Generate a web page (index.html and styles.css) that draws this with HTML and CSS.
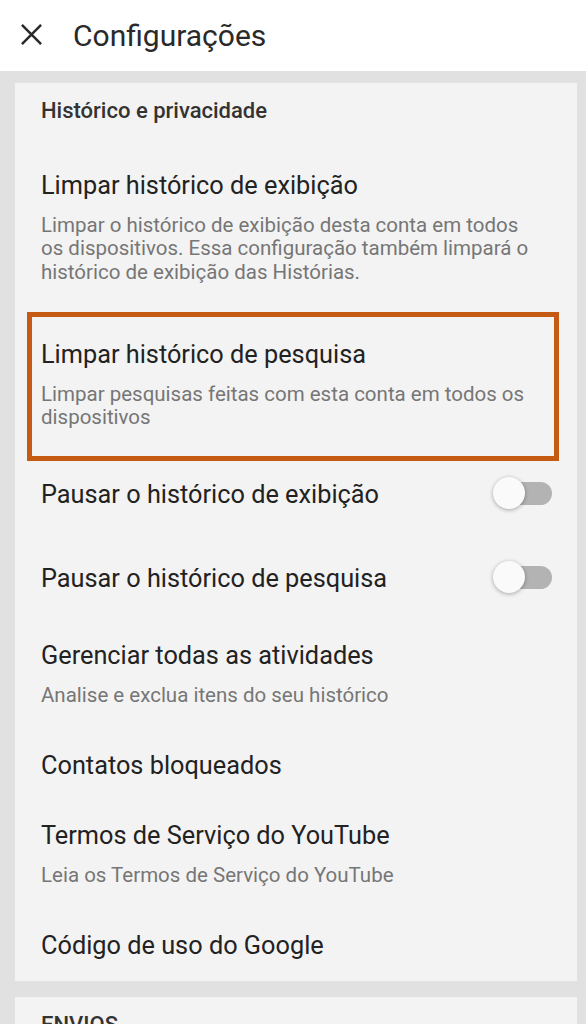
FILE: index.html
```html
<!DOCTYPE html>
<html lang="pt-BR">
<head>
<meta charset="utf-8">
<title>Configurações</title>
<link rel="stylesheet" href="styles.css">
</head>
<body>
<header class="appbar">
  <svg class="close-icon" viewBox="0 0 24 24" width="24" height="24" aria-hidden="true">
    <path d="M2 2 L22 22 M22 2 L2 22" stroke="#2a2a2a" stroke-width="2.6" fill="none"/>
  </svg>
  <h1 class="appbar-title">Configurações</h1>
</header>

<main class="content">
  <section class="card">
    <h2 class="card-heading">Histórico e privacidade</h2>

    <div class="row">
      <div class="row-text">
        <div class="title">Limpar histórico de exibição</div>
        <div class="desc">Limpar o histórico de exibição desta conta em todos os dispositivos. Essa configuração também limpará o histórico de exibição das Histórias.</div>
      </div>
    </div>

    <div class="row row--marked">
      <div class="row-text">
        <div class="title">Limpar histórico de pesquisa</div>
        <div class="desc">Limpar pesquisas feitas com esta conta em todos os dispositivos</div>
      </div>
    </div>

    <div class="row row--switch">
      <div class="row-text">
        <div class="title">Pausar o histórico de exibição</div>
      </div>
      <span class="switch"><span class="switch-thumb"></span></span>
    </div>

    <div class="row row--switch">
      <div class="row-text">
        <div class="title">Pausar o histórico de pesquisa</div>
      </div>
      <span class="switch"><span class="switch-thumb"></span></span>
    </div>

    <div class="row">
      <div class="row-text">
        <div class="title">Gerenciar todas as atividades</div>
        <div class="desc">Analise e exclua itens do seu histórico</div>
      </div>
    </div>

    <div class="row">
      <div class="row-text">
        <div class="title">Contatos bloqueados</div>
      </div>
    </div>

    <div class="row">
      <div class="row-text">
        <div class="title">Termos de Serviço do YouTube</div>
        <div class="desc">Leia os Termos de Serviço do YouTube</div>
      </div>
    </div>

    <div class="row">
      <div class="row-text">
        <div class="title">Código de uso do Google</div>
      </div>
    </div>
  </section>

  <section class="card card--last">
    <h2 class="card-heading">ENVIOS</h2>
  </section>
</main>
</body>
</html>
```

FILE: styles.css
```css
html, body {
  margin: 0;
  padding: 0;
}

body {
  background: #e1e1e1;
  font-family: Roboto, "Liberation Sans", Arial, sans-serif;
  color: #212121;
  height: 1024px;
  overflow: hidden;
}

.appbar {
  height: 71px;
  background: #ffffff;
  display: flex;
  align-items: center;
  padding-left: 20px;
  box-sizing: border-box;
}

.close-icon {
  width: 23px;
  height: 23px;
  flex: none;
  margin-top: -2px;
}

.appbar-title {
  margin: 0 0 0 30px;
  font-size: 30px;
  line-height: 34px;
  font-weight: 400;
  color: #2a2a2a;
}

.content {
  padding: 12px 9px 0 15px;
  display: flex;
  flex-direction: column;
  gap: 16px;
}

.card {
  background: #f3f3f3;
}

.card--last {
  height: 60px;
}

.card-heading {
  margin: 0;
  padding: 14.5px 26px 27px;
  font-size: 22px;
  line-height: 26px;
  font-weight: 500;
  color: #333333;
}

.row {
  display: flex;
  align-items: center;
  padding: 20px 45px 20px 26px;
}

.row-text {
  flex: 1;
  min-width: 0;
}

.title {
  font-size: 25.3px;
  line-height: 30px;
  color: #222222;
}

.desc {
  margin: 13px 0 3.5px;
  font-size: 20.5px;
  line-height: 23.5px;
  color: #767676;
}

.row--marked {
  position: relative;
  margin-top: 12px;
}

.row--marked::after {
  content: "";
  position: absolute;
  top: -8px;
  bottom: -7.5px;
  left: 12px;
  right: 18px;
  border: 5px solid #c55a13;
  pointer-events: none;
}

.row--switch {
  padding-top: 27px;
  padding-bottom: 27px;
  padding-right: 25px;
}

.switch {
  position: relative;
  flex: none;
  width: 56px;
  height: 23px;
  border-radius: 12px;
  background: #b3b3b3;
  margin-bottom: 4px;
}

.switch-thumb {
  position: absolute;
  left: -3px;
  top: -4.5px;
  width: 32px;
  height: 32px;
  border-radius: 50%;
  background: #fafafa;
  box-shadow: 0 1px 4px rgba(0, 0, 0, 0.32);
}
```
